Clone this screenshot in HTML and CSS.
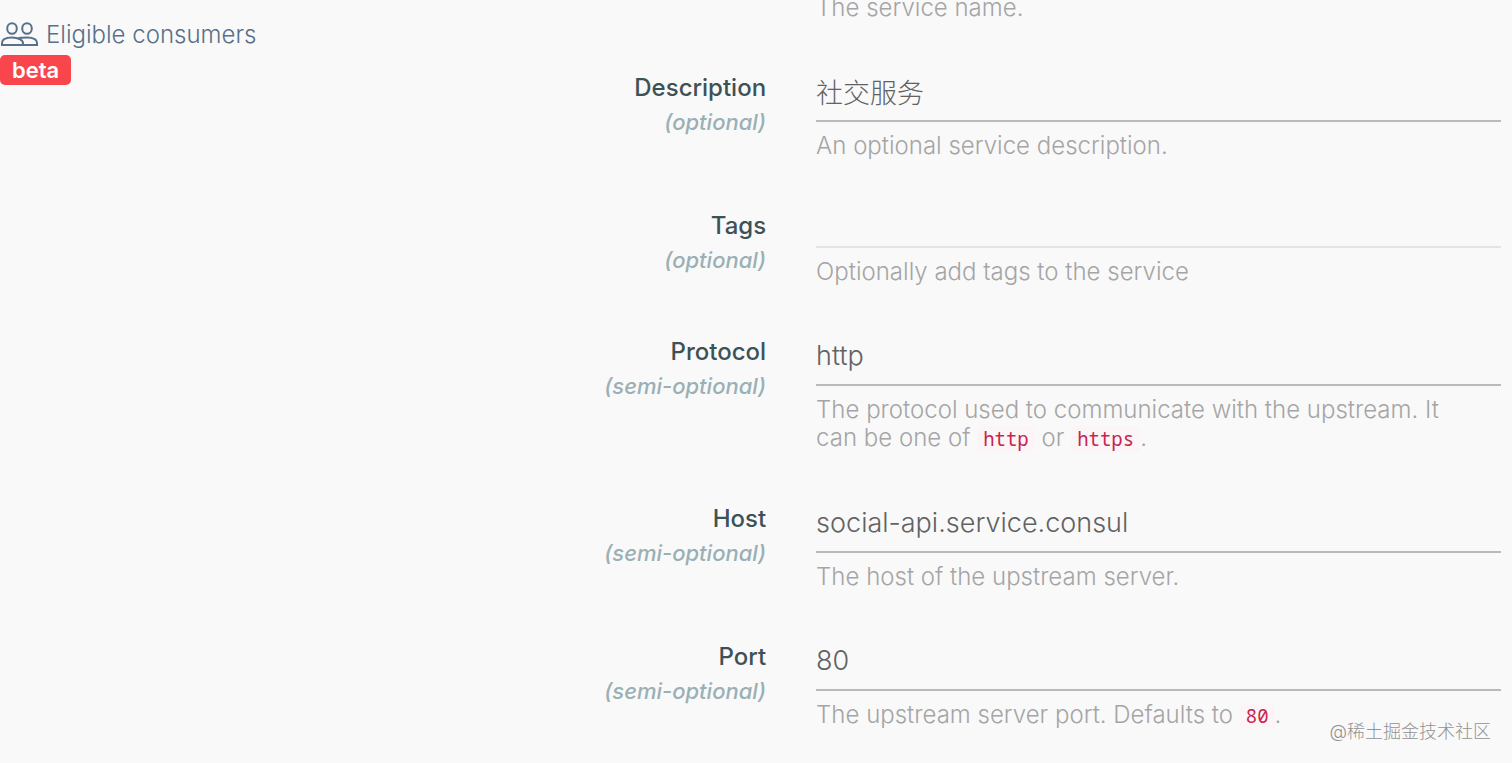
FILE: index.html
```html
<!DOCTYPE html>
<html lang="en">
<head>
    <meta charset="UTF-8">
    <meta name="viewport" content="width=device-width, initial-scale=1.0">
    <title>Service details</title>
    <link rel="stylesheet" href="styles.css">
</head>
<body>
    <div class="layout">
        <nav class="sidebar">
            <a href="#consumers" class="nav-link">
                <svg class="nav-icon" viewBox="0 0 38 26" fill="none" stroke="currentColor" stroke-width="2">
                    <ellipse cx="12" cy="6.500" rx="4.800" ry="5.300"/>
                    <ellipse cx="27" cy="6.500" rx="4.800" ry="5.300"/>
                    <path d="M2 23V21c0-3.500 4-5.500 10-5.500s11 2.500 11 5.500v2z"/>
                    <path d="M18 16.500c2-.7 5-1 9-1 6 0 10 2 10 5.500v2H22"/>
                </svg>
                <span>Eligible consumers</span>
            </a>
            <span class="badge">beta</span>
        </nav>

        <form class="service-form">
            <div class="form-row">
                <p class="help">The service name.</p>
            </div>

            <div class="form-row">
                <label for="description">Description <em>(optional)</em></label>
                <div class="field">
                    <input type="text" id="description" value="社交服务">
                    <p class="help">An optional service description.</p>
                </div>
            </div>

            <div class="form-row">
                <label for="tags">Tags <em>(optional)</em></label>
                <div class="field">
                    <input type="text" id="tags" class="tags-input">
                    <p class="help">Optionally add tags to the service</p>
                </div>
            </div>

            <div class="form-row">
                <label for="protocol">Protocol <em>(semi-optional)</em></label>
                <div class="field">
                    <input type="text" id="protocol" value="http">
                    <p class="help">The protocol used to communicate with the upstream. It can be one of <code>http</code> or <code>https</code>.</p>
                </div>
            </div>

            <div class="form-row">
                <label for="host">Host <em>(semi-optional)</em></label>
                <div class="field">
                    <input type="text" id="host" value="social-api.service.consul">
                    <p class="help">The host of the upstream server.</p>
                </div>
            </div>

            <div class="form-row">
                <label for="port">Port <em>(semi-optional)</em></label>
                <div class="field">
                    <input type="text" id="port" value="80">
                    <p class="help">The upstream server port. Defaults to <code>80</code>.</p>
                </div>
            </div>
        </form>
    </div>
    <div class="watermark">@稀土掘金技术社区</div>
</body>
</html>
```
FILE: styles.css
```css
* {
    box-sizing: border-box;
}

body {
    margin: 0;
    background-color: #f9f9f9;
    color: #a5a5a5;
    font-family: Inter, "Noto Sans CJK SC", sans-serif;
    font-size: 24px;
    font-weight: 300;
    line-height: 28px;
}

.layout {
    display: grid;
    grid-template-columns: 1fr 3fr;
}

.sidebar {
    padding-top: 21px;
}

.nav-link {
    display: flex;
    align-items: center;
    gap: 8px;
    color: #587089;
    text-decoration: none;
}

.nav-icon {
    width: 38px;
    height: 26px;
}

.badge {
    display: inline-block;
    margin-top: 6px;
    padding: 1px 12px;
    border-radius: 5px;
    background-color: #f8464c;
    color: white;
    font-size: 22px;
    font-weight: 600;
}

.service-form {
    display: flex;
    flex-direction: column;
    gap: 48px;
    margin-top: -6px;
    padding-right: 11px;
}

.form-row {
    display: grid;
    grid-template-columns: 17fr 30fr;
    column-gap: 50px;
}

label {
    color: #3d5257;
    font-weight: 500;
    line-height: 35px;
    text-align: right;
}

label em {
    display: block;
    color: #9ab0b5;
    font-size: 22px;
}

input {
    display: block;
    width: 100%;
    height: 52px;
    padding: 0 0 8px;
    border: none;
    border-bottom: 2px solid #bababa;
    outline: none;
    background: transparent;
    color: #626262;
    font: inherit;
    font-size: 27px;
}

.tags-input {
    height: 40px;
    border-bottom-color: #e4e4e4;
}

.help {
    grid-column: 2;
    margin: 0;
    padding-right: 24px;
}

.field .help {
    margin-top: 10px;
}

code {
    padding: 0 6px;
    border-radius: 4px;
    background-color: #fbf5f7;
    color: #c7254e;
    font-family: "Noto Sans Mono", "DejaVu Sans Mono", monospace;
    font-size: 19px;
    font-weight: 400;
}

.watermark {
    position: absolute;
    right: 21px;
    bottom: 17px;
    color: #929292;
    font-size: 18px;
}
```
